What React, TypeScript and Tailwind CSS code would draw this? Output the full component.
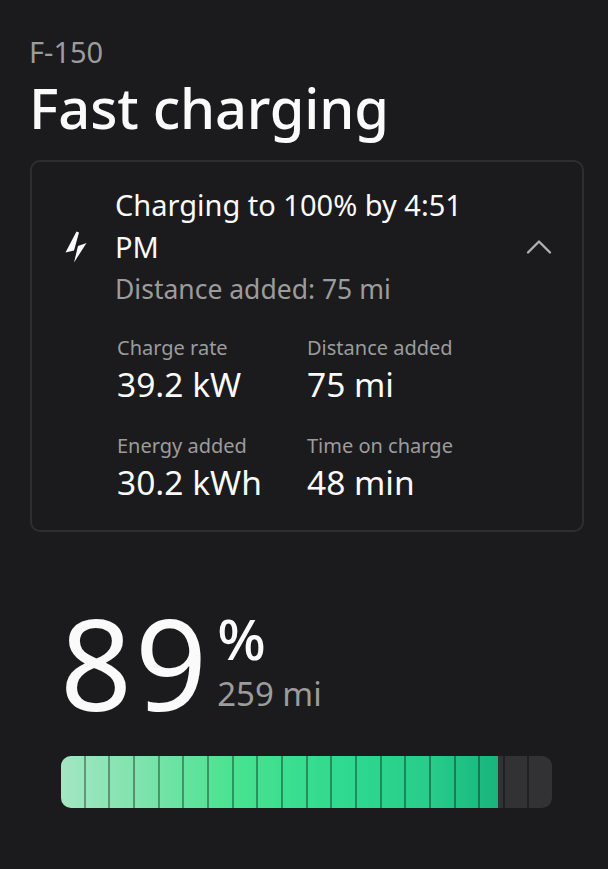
import { ChevronUp } from 'lucide-react';

const stats = [
  { label: 'Charge rate', value: '39.2 kW' },
  { label: 'Distance added', value: '75 mi' },
  { label: 'Energy added', value: '30.2 kWh' },
  { label: 'Time on charge', value: '48 min' },
];

const segments = Array.from({ length: 20 }, (_, i) => i);

export default function App() {
  return (
    <div className="h-[869px] w-[608px] overflow-hidden bg-[#1b1b1d] px-[30px] pt-[35px] font-['Noto_Sans',sans-serif] text-[#fafafa]">
      <p className="-ml-[1px] text-[29px] leading-[34px] text-[#9c9c9c]">F-150</p>
      <h1 className="-ml-[1px] mt-[6px] text-[56px] font-medium leading-[64px] tracking-[-0.2px]">Fast charging</h1>

      {/* Status card */}
      <div className="mt-[21px] h-[372px] w-[554px] rounded-[10px] border-2 border-[#2e2e30] pl-[33px] pr-[21px] pt-[22px]">
        <div className="flex items-center">
          <svg viewBox="0 0 22 32" className="h-[32px] w-[22px] shrink-0" fill="currentColor">
            <path d="M11.5 0.5 L14 1.5 L9 19.5 L0.5 21.5 Z" />
            <path d="M21.5 12 L13 15 L9 31.5 Z" />
          </svg>
          <div className="ml-[28px] w-[370px]">
            <p className="text-[29px] leading-[42px]">Charging to 100% by 4:51 PM</p>
            <p className="text-[26.5px] leading-[42px] text-[#9c9c9c]">Distance added: 75 mi</p>
          </div>
          <ChevronUp className="ml-auto h-[44px] w-[44px] text-[#b0b0b2]" strokeWidth={1.3} />
        </div>

        <div className="mt-[25px] grid w-[380px] grid-cols-[190px_190px] gap-y-[26px] pl-[52px]">
          {stats.map((s) => (
            <div key={s.label}>
              <p className="text-[20px] leading-[26px] text-[#9c9c9c]">{s.label}</p>
              <p className="text-[33.5px] leading-[46px]">{s.value}</p>
            </div>
          ))}
        </div>
      </div>

      {/* Battery level */}
      <div className="ml-[30px] mt-[55px] flex">
        <span className="text-[126px] font-normal leading-[150px] tracking-[3px]">89</span>
        <div className="ml-[7px] flex flex-col">
          <span className="mt-[18px] text-[57px] font-medium leading-[66px]">%</span>
          <span className="mt-[2px] text-[33px] leading-[42px] text-[#9c9c9c]">259 mi</span>
        </div>
      </div>

      <div className="relative ml-[31px] mt-[19px] h-[52px] w-[491px] overflow-hidden rounded-[10px] bg-[#323234]">
        <div className="absolute inset-y-0 left-0 w-[89%] bg-[linear-gradient(90deg,#a3e6c2_0%,#7ae3aa_20%,#47e38f_40%,#2fd98f_65%,#27cc8a_85%,#18b47c_100%)]" />
        <div className="absolute inset-0 flex">
          {segments.map((i) => (
            <div key={i} className="flex-1 border-r-2 border-black/35 last:border-r-0" />
          ))}
        </div>
      </div>
    </div>
  );
}
